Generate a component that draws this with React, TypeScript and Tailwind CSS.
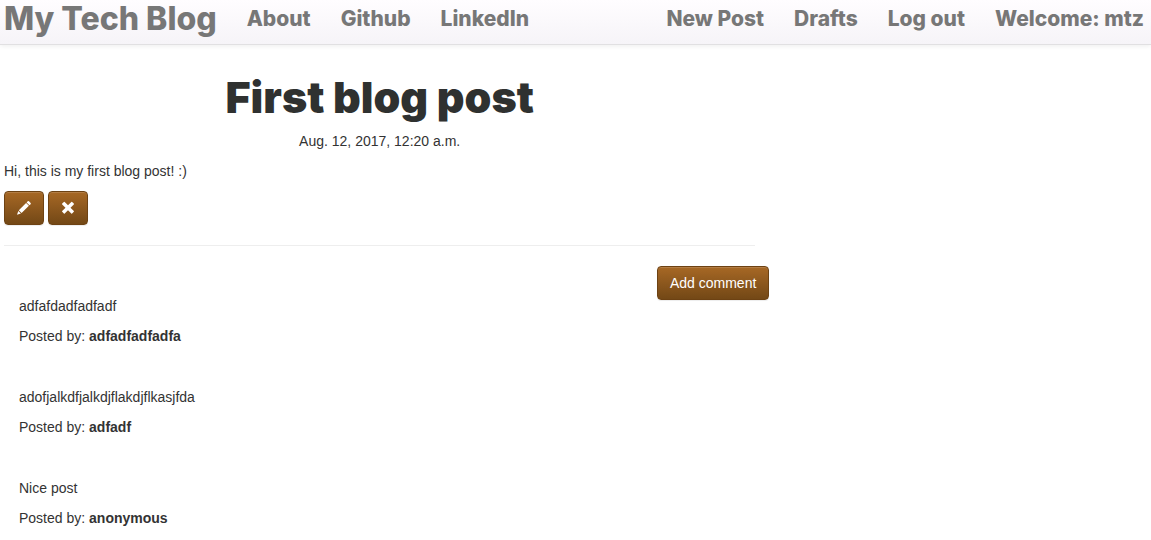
import type { ReactNode } from "react";

const siteLinks = ["About", "Github", "LinkedIn"];
const userLinks = ["New Post", "Drafts", "Log out", "Welcome: mtz"];

const comments = [
  { text: "adfafdadfadfadf", author: "adfadfadfadfa" },
  { text: "adofjalkdfjalkdjflakdjflkasjfda", author: "adfadf" },
  { text: "Nice post", author: "anonymous" },
];

function NavLinks({ items }: { items: string[] }) {
  return (
    <ul className="flex gap-[30px]">
      {items.map((item) => (
        <li key={item}>
          <a href="#" className="whitespace-nowrap hover:text-[#333]">
            {item}
          </a>
        </li>
      ))}
    </ul>
  );
}

function Button({ children, label }: { children: ReactNode; label?: string }) {
  return (
    <button
      type="button"
      aria-label={label}
      className="flex h-[34px] shrink-0 items-center rounded border border-[#6d4213] bg-linear-to-b from-[#a76825] to-[#734816] px-3 text-white shadow-[inset_0_1px_0_rgba(255,255,255,0.15),0_1px_1px_rgba(0,0,0,0.075)] hover:to-[#8a571c]"
    >
      {children}
    </button>
  );
}

export default function App() {
  return (
    <div className="bg-white font-['Liberation_Sans',Arial,sans-serif] text-[14px] leading-5 text-[#333]">
      <header className="border-b border-[#e1e0e2] bg-linear-to-b from-[#fffdff] to-[#f6f4f8] shadow-[0_1px_5px_rgba(0,0,0,0.075)]">
        <nav className="flex h-11 items-start justify-between pl-1 pr-[7px] pt-1 font-[Inter,sans-serif] text-[21px] font-extrabold leading-[30px] text-[#777]">
          <div className="flex gap-[30px]">
            <a href="#" className="whitespace-nowrap text-[32px]">
              My Tech Blog
            </a>
            <NavLinks items={siteLinks} />
          </div>
          <NavLinks items={userLinks} />
        </nav>
      </header>

      <main className="w-2/3 pl-1 pr-3">
        <article>
          <h1 className="pt-[28px] text-center font-[Inter,sans-serif] text-[43px] font-black leading-[48px] text-[#2f3130]">
            First blog post
          </h1>
          <p className="mt-[10px] text-center">Aug. 12, 2017, 12:20 a.m.</p>
          <p className="mt-[10px]">Hi, this is my first blog post! :)</p>
          <div className="mt-[10px] flex gap-1">
            <Button label="Edit post">
              <svg viewBox="0 0 14 14" className="size-[14px]" fill="currentColor" aria-hidden="true">
                <path d="M10.7 .3a1 1 0 0 1 1.3 0l1.6 1.6a1 1 0 0 1 0 1.3l-1.1 1.1-2.9-2.9zM9.1 2l2.8 2.8-7.3 7.3-2.8-2.8zM1.3 10l2.6 2.6L0 13.8z" />
              </svg>
            </Button>
            <Button label="Delete post">
              <svg viewBox="0 0 14 14" className="size-[14px]" fill="currentColor" aria-hidden="true">
                <path d="M3.7.9 7 4.2 10.3.9q.4-.4.8 0l1.7 1.7q.4.4 0 .8L9.5 6.7l3.3 3.3q.4.4 0 .8l-1.7 1.7q-.4.4-.8 0L7 9.2l-3.3 3.3q-.4.4-.8 0l-1.7-1.7q-.4-.4 0-.8l3.3-3.3-3.3-3.3q-.4-.4 0-.8L2.9.9q.4-.4.8 0z" />
              </svg>
            </Button>
          </div>
        </article>

        <hr className="my-5 border-[#eee]" />

        <section aria-label="Comments" className="-mr-[14px] flex items-start justify-between">
          <ul className="flex flex-col gap-[41px] pl-[15px] pt-[30px]">
            {comments.map((comment) => (
              <li key={comment.author}>
                <p>{comment.text}</p>
                <p className="mt-[10px]">
                  Posted by: <strong>{comment.author}</strong>
                </p>
              </li>
            ))}
          </ul>
          <Button>Add comment</Button>
        </section>
      </main>
    </div>
  );
}
